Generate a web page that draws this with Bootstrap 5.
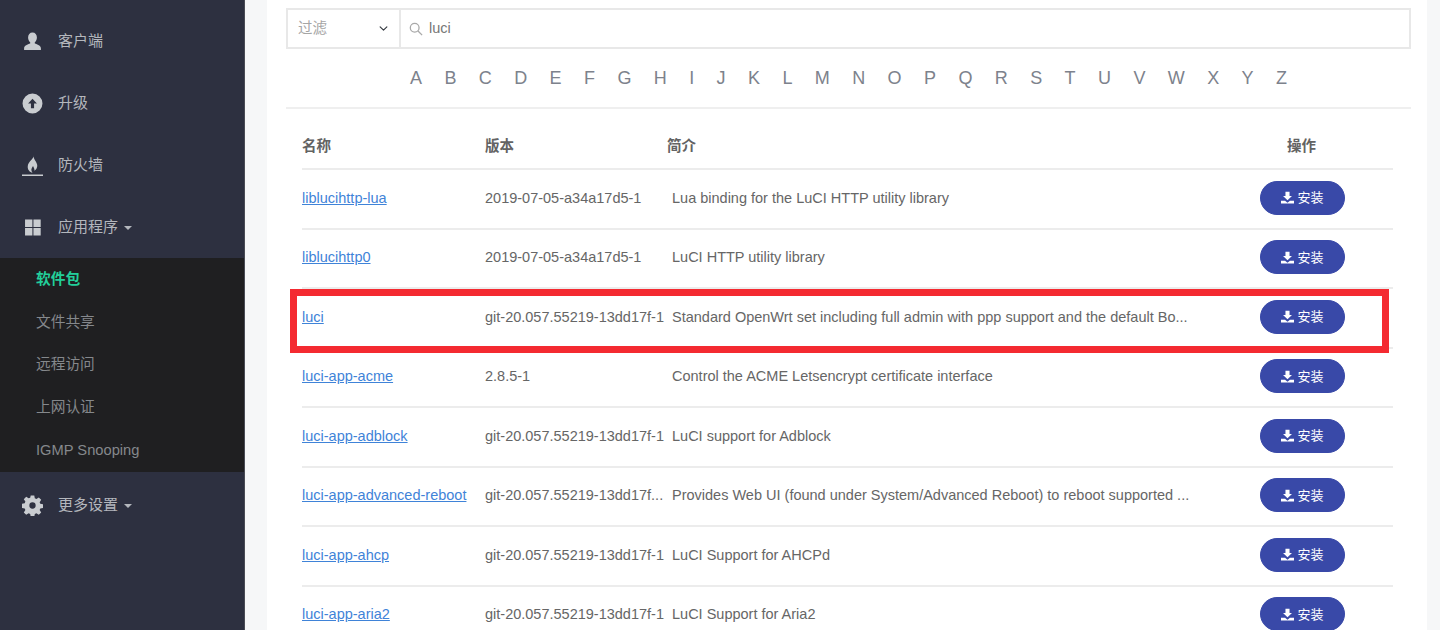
<!DOCTYPE html>
<html lang="zh-CN">
<head>
  <meta charset="UTF-8">
  <meta name="viewport" content="width=device-width, initial-scale=1.0">
  <title>软件包</title>
  <link href="https://cdn.jsdelivr.net/npm/bootstrap@5.3.0/dist/css/bootstrap.min.css" rel="stylesheet">
  <style>
    html, body { height: 630px; overflow: hidden; }
    body { font-family: "Liberation Sans", "Noto Sans CJK SC", sans-serif; font-size: 14.500px; color: #666; background: #f6f7f8; }
    .side-bar { width: 245px; height: 630px; padding-top: 10px; background: #2d3040; border-right: 1px solid #4a4c55; flex-shrink: 0; font-size: 15px; }
    .side-link { height: 62px; padding: 1px 0 0 22px; color: #b4b7bd; display: flex; align-items: center; gap: 15px; }
    .side-link svg { width: 21px; height: 21px; fill: #c9ccd0; flex-shrink: 0; }
    .side-last { height: 66px; }
    .side-caret { display: inline-block; margin-left: 6px; vertical-align: middle; border-top: 4px solid #b4b7bd; border-left: 4px solid transparent; border-right: 4px solid transparent; }
    .side-sub { background: #1f1f21; height: 214px; padding: 0; }
    .side-sub a { height: 42.800px; padding: 0 0 1px 36px; color: #85888c; display: flex; align-items: center; font-size: 14.700px; }
    .side-sub a.is-on { color: #22cf9a; font-weight: 700; }
    .page-main { flex: 1; min-width: 0; padding: 0 13px 0 22px; position: relative; overflow: hidden; }
    .main-box { background: #fff; height: 700px; padding: 8px 16px 0 19px; }
    .filter-group { height: 41px; border: 2px solid #e8e8e8; flex-wrap: nowrap; }
    .filter-group .form-select { flex: 0 0 113px; width: 113px; border: 0; border-right: 2px solid #e8e8e8; border-radius: 0; color: #a5a5a5; font-size: 14.500px; padding: 0 0 0 10px; box-shadow: none; background-position: right 10px center; background-size: 11px 9px; }
    .filter-group .input-group-text { background: #fff; border: 0; border-radius: 0; padding: 0 7px 0 9px; }
    .filter-group .form-control { border: 0; border-radius: 0; padding: 0; font-size: 14.500px; color: #777; box-shadow: none; }
    .alpha-row { gap: 22.400px; height: 26px; margin: 16px 0 16px; font-size: 18px; line-height: 26px; }
    .alpha-row a { color: #7d828c; text-decoration: none; }
    .main-rule { margin: 0 0 16px; border: 0; border-top: 2px solid #efefef; opacity: 1; }
    .pkg-table { width: 1091px; margin: 0 0 0 16px; table-layout: fixed; color: #666; --bs-table-color: #666; }
    .pkg-table th { height: 44px; padding: 0; font-weight: 700; color: #636363; border-bottom: 2px solid #ececec; vertical-align: middle; }
    .pkg-table td { height: 59.500px; padding: 0; border-bottom: 2px solid #ececec; vertical-align: middle; white-space: nowrap; }
    .pkg-table td:nth-child(3) { padding: 0 0 0 5px; }
    .pkg-table td:first-child a { color: #3f83d8; }
    .pkg-table td.pkg-act { text-align: center; padding: 0 0 2px 2px; }
    .pkg-install { display: inline-flex; align-items: center; justify-content: center; vertical-align: middle; gap: 3px; width: 85px; height: 34px; padding: 0; font-size: 13px; color: #fff; background: #3949a8; border-color: #3949a8; }
    .pkg-install svg { width: 13px; height: 13px; fill: #fff; }
    .red-mark { position: absolute; left: 45px; top: 289px; width: 1099px; height: 64px; border: 7px solid #f42a31; pointer-events: none; }
    .col-pkg-a { width: 183px; }
    .col-pkg-b { width: 182px; }
    .col-pkg-c { width: 543px; }
    .col-pkg-d { width: 183px; }
  </style>
</head>
<body>
  <svg width="0" height="0" class="position-absolute">
    <symbol id="ic-dl" viewBox="0 0 16 16"><path d="M5.500 1h5v5h3L8 11.500 2.500 6h3zM0 12h5l3 2.500 3-2.500h5v3.500H0z"/></symbol>
  </svg>
  <div class="d-flex">
    <nav class="side-bar">
      <a class="side-link text-decoration-none" href="#">
        <svg viewBox="0 0 20 20"><path d="M10 1.500c2.600 0 4.200 2 4.200 4.700 0 2-.9 3.700-2 4.500v1.300c2.500.8 5.800 2 5.800 4.500V18H2v-1.500c0-2.500 3.300-3.700 5.800-4.500v-1.300c-1.100-.8-2-2.500-2-4.500C5.800 3.500 7.400 1.500 10 1.500z"/></svg>
        <span>客户端</span>
      </a>
      <a class="side-link text-decoration-none" href="#">
        <svg viewBox="0 0 20 20"><path fill-rule="evenodd" d="M10 .5a9.500 9.500 0 1 1 0 19 9.500 9.500 0 0 1 0-19zM10 5.500 5.800 10h2.700v4.500h3V10h2.700z"/></svg>
        <span>升级</span>
      </a>
      <a class="side-link text-decoration-none" href="#">
        <svg viewBox="0 0 20 20"><path d="M11 0c1 3-5 6-5.500 10.500C5 14 7.500 16.500 10 17c-1.500-2-1.500-4 .5-6.500.5 1.500 1.700 2.500 1.300 4.500 1.700-1 3-3 2.700-5.500C14 6 10.500 4 11 0zM0 18.500h20V20H0z"/></svg>
        <span>防火墙</span>
      </a>
      <a class="side-link text-decoration-none" href="#">
        <svg viewBox="0 0 20 20"><path d="M2.900 2.400h7v7.100h-7zM10.900 2.400h6.900v7.100h-6.900zM2.900 10.500h7v7.100h-7zM10.900 10.500h6.900v7.100h-6.900z"/></svg>
        <span>应用程序<i class="side-caret"></i></span>
      </a>
      <div class="side-sub">
        <a class="is-on text-decoration-none" href="#">软件包</a>
        <a class="text-decoration-none" href="#">文件共享</a>
        <a class="text-decoration-none" href="#">远程访问</a>
        <a class="text-decoration-none" href="#">上网认证</a>
        <a class="text-decoration-none" href="#">IGMP Snooping</a>
      </div>
      <a class="side-link side-last text-decoration-none" href="#">
        <svg viewBox="0 0 20 20"><path fill-rule="evenodd" d="M8.300 .5h3.400l.5 2.700 1.500.6 2.300-1.500 2.300 2.300-1.500 2.300.6 1.500 2.700.5v3.400l-2.700.5-.6 1.500 1.500 2.300-2.300 2.300-2.300-1.500-1.500.6-.5 2.700H8.300l-.5-2.700-1.500-.6-2.300 1.500-2.300-2.300 1.500-2.300-.6-1.500-2.700-.5V8.300l2.700-.5.6-1.500-1.500-2.300 2.300-2.300 2.300 1.500 1.500-.6zM10 7a3 3 0 1 0 0 6 3 3 0 0 0 0-6z"/></svg>
        <span>更多设置<i class="side-caret"></i></span>
      </a>
    </nav>

    <main class="page-main">
      <div class="main-box">
        <div class="input-group filter-group">
          <select class="form-select"><option>过滤</option></select>
          <span class="input-group-text">
            <svg width="14" height="14" viewBox="0 0 16 16" fill="none" stroke="#a9a9a9" stroke-width="1.500"><circle cx="6.500" cy="6.500" r="5"/><path d="M10.300 10.300 15 15"/></svg>
          </span>
          <input class="form-control" type="text" value="luci">
        </div>
        <div id="alpha" class="alpha-row d-flex justify-content-center"></div>
        <hr class="main-rule">
        <table class="table pkg-table mb-0">
          <colgroup>
            <col class="col-pkg-a"><col class="col-pkg-b"><col class="col-pkg-c"><col class="col-pkg-d">
          </colgroup>
          <thead>
            <tr><th>名称</th><th>版本</th><th>简介</th><th class="text-center">操作</th></tr>
          </thead>
          <tbody id="rows"></tbody>
        </table>
      </div>
      <div class="red-mark"></div>
    </main>
  </div>

  <script>
    const pkgs = [
      ['liblucihttp-lua', '2019-07-05-a34a17d5-1', 'Lua binding for the LuCI HTTP utility library'],
      ['liblucihttp0', '2019-07-05-a34a17d5-1', 'LuCI HTTP utility library'],
      ['luci', 'git-20.057.55219-13dd17f-1', 'Standard OpenWrt set including full admin with ppp support and the default Bo...'],
      ['luci-app-acme', '2.8.5-1', 'Control the ACME Letsencrypt certificate interface'],
      ['luci-app-adblock', 'git-20.057.55219-13dd17f-1', 'LuCI support for Adblock'],
      ['luci-app-advanced-reboot', 'git-20.057.55219-13dd17f...', 'Provides Web UI (found under System/Advanced Reboot) to reboot supported ...'],
      ['luci-app-ahcp', 'git-20.057.55219-13dd17f-1', 'LuCI Support for AHCPd'],
      ['luci-app-aria2', 'git-20.057.55219-13dd17f-1', 'LuCI Support for Aria2']
    ];
    document.getElementById('alpha').innerHTML = 'ABCDEFGHIJKLMNOPQRSTUVWXYZ'.split('').map(l => `<a href="#">${l}</a>`).join('');
    document.getElementById('rows').innerHTML = pkgs.map(p => `
      <tr>
        <td><a href="#">${p[0]}</a></td>
        <td>${p[1]}</td>
        <td>${p[2]}</td>
        <td class="pkg-act"><button class="btn rounded-pill pkg-install"><svg><use href="#ic-dl"/></svg>安装</button></td>
      </tr>`).join('');
  </script>
  <script src="https://cdn.jsdelivr.net/npm/bootstrap@5.3.0/dist/js/bootstrap.bundle.min.js"></script>
</body>
</html>
